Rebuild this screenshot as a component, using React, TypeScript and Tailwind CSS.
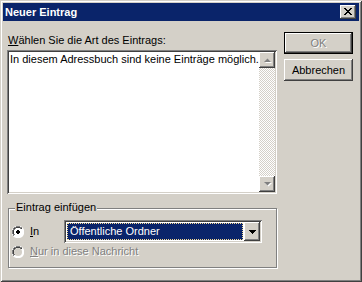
const raised =
    "shadow-[inset_-1px_-1px_#404040,inset_1px_1px_#fff,inset_-2px_-2px_#808080,inset_2px_2px_#d4d0c8]";

const DisabledArrow = ({ up }: { up?: boolean }) => (
    <svg width="9" height="6" viewBox="0 0 9 6">
        {up ? (
            <>
                <path d="M1 5h7L4.5 1.5z" fill="#fff" transform="translate(1 1)" />
                <path d="M1 5h7L4.5 1.5z" fill="#808080" />
            </>
        ) : (
            <>
                <path d="M1 1h7L4.5 4.5z" fill="#fff" transform="translate(1 1)" />
                <path d="M1 1h7L4.5 4.5z" fill="#808080" />
            </>
        )}
    </svg>
);

const Radio = ({ checked, disabled }: { checked?: boolean; disabled?: boolean }) => (
    <svg width="12" height="12" viewBox="0 0 12 12" className="shrink-0">
        <path d="M4 0h4l2 1 1 1 1 2v4l-1 2-1 1-2 1H4L2 11 1 10 0 8V4l1-2 1-1z" fill="#fff" />
        <path d="M4 0h4v1H4zM2 1h2v1H2zM8 1h2v1H8zM1 2h1v2H1zM0 4h1v4H0zM1 8h1v2H1z" fill="#808080" />
        <path d="M4 1h4v1H4zM2 2h2v1H2zM8 2h2v1H8zM2 3h1v1H2zM1 4h1v4H1zM2 8h1v1H2z" fill="#404040" />
        <circle cx="6" cy="6" r="4" fill={disabled ? "#d4d0c8" : "#fff"} />
        {checked && <path d="M5 4h2v1h1v2H7v1H5V7H4V5h1z" fill="#000" />}
    </svg>
);

export default function App() {
    return (
        <div className="w-[362px] h-[282px] bg-[#d4d0c8] p-[3px] flex flex-col font-['Liberation_Sans',Arial,sans-serif] text-[11px] leading-[13px] text-black shadow-[inset_1px_1px_#d4d0c8,inset_-1px_-1px_#404040,inset_2px_2px_#fff,inset_-2px_-2px_#808080]">
            {/* title bar */}
            <div className="h-[18px] bg-[#0a246a] flex items-center pl-[2px]">
                <span className="flex-1 text-white font-bold text-[11px]">Neuer Eintrag</span>
                <div className={`w-[16px] h-[14px] mr-[3px] bg-[#d4d0c8] flex items-center justify-center ${raised}`}>
                    <svg width="8" height="7" viewBox="0 0 8 7" className="mt-[-1px]">
                        <path
                            d="M0 0h2v1h1v1h2V1h1V0h2v1H7v1H6v1H5v1h1v1h1v1h1v1H6V6H5V5H3v1H2v1H0V6h1V5h1V4h1V3H2V2H1V1H0z"
                            fill="#000"
                        />
                    </svg>
                </div>
            </div>

            <div className="flex pl-[4px]">
                {/* left column */}
                <div className="w-[270px] flex flex-col">
                    <div className="mt-[13px] pl-[1px]">
                        <span className="underline">W</span>ählen Sie die Art des Eintrags:
                    </div>

                    <div className="mt-[3px] h-[144px] p-[2px] bg-white flex shadow-[inset_1px_1px_#808080,inset_-1px_-1px_#fff,inset_2px_2px_#404040,inset_-2px_-2px_#d4d0c8]">
                        <div className="flex-1 pl-[1px] pt-[1px]">
                            In diesem Adressbuch sind keine Einträge möglich.
                        </div>
                        <div className="w-[16px] flex flex-col">
                            <div className={`h-[16px] bg-[#d4d0c8] flex items-center justify-center ${raised}`}>
                                <DisabledArrow up />
                            </div>
                            <div className="flex-1 bg-[repeating-conic-gradient(#d4d0c8_0_25%,#fff_0_50%)] bg-[length:2px_2px]" />
                            <div className={`h-[16px] bg-[#d4d0c8] flex items-center justify-center ${raised}`}>
                                <DisabledArrow />
                            </div>
                        </div>
                    </div>

                    {/* group box */}
                    <div className="relative mt-[14px] ml-[1px] w-[269px] h-[60px] border border-[#808080] shadow-[inset_1px_1px_#fff,1px_1px_#fff]">
                        <span className="absolute left-[6px] top-[-8px] px-[1px] bg-[#d4d0c8]">Eintrag einfügen</span>
                        <div className="pt-[11px] pl-[3px] flex flex-col">
                            <div className="h-[23px] flex items-center">
                                <div className="w-[52px] flex items-center gap-[6px]">
                                    <Radio checked />
                                    <span>
                                        <span className="underline">I</span>n
                                    </span>
                                </div>
                                <div className="w-[198px] h-[23px] p-[2px] flex shadow-[inset_1px_1px_#808080,inset_-1px_-1px_#fff,inset_2px_2px_#404040,inset_-2px_-2px_#d4d0c8]">
                                    <div className="flex-1 bg-white p-[1px] flex">
                                        <div className="flex-1 bg-[#0a246a] border border-dotted border-[#f5db95] text-white pl-[2px] flex items-center">
                                            Öffentliche Ordner
                                        </div>
                                    </div>
                                    <div className={`w-[16px] bg-[#d4d0c8] flex items-center justify-center ${raised}`}>
                                        <svg width="7" height="4" viewBox="0 0 7 4">
                                            <path d="M0 0h7v1H6v1H5v1H4v1H3V3H2V2H1V1H0z" fill="#000" />
                                        </svg>
                                    </div>
                                </div>
                            </div>
                            <div className="mt-[2px] flex items-center gap-[6px] text-[#808080] [text-shadow:1px_1px_0_#fff]">
                                <Radio disabled />
                                <span>
                                    <span className="underline">N</span>ur in diese Nachricht
                                </span>
                            </div>
                        </div>
                    </div>
                </div>

                {/* right column */}
                <div className="ml-[7px] w-[69px] pt-[11px] flex flex-col gap-[5px]">
                    <div className="h-[22px] border border-black bg-[#d4d0c8] flex items-center justify-center text-[#808080] [text-shadow:1px_1px_0_#fff] shadow-[inset_-1px_-1px_#404040,inset_1px_1px_#fff,inset_-2px_-2px_#808080]">
                        OK
                    </div>
                    <div className={`h-[22px] bg-[#d4d0c8] flex items-center justify-center ${raised}`}>
                        Abbrechen
                    </div>
                </div>
            </div>
        </div>
    );
}
